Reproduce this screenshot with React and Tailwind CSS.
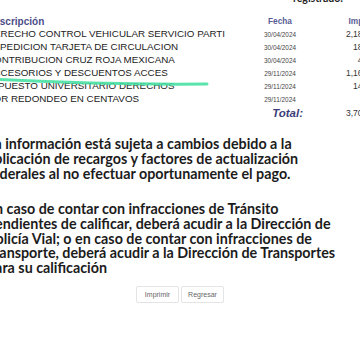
export default function App() {
  const rows = [
    { desc: 'DERECHO CONTROL VEHICULAR SERVICIO PARTI', date: '30/04/2024', amount: '2,189.00' },
    { desc: 'EXPEDICION TARJETA DE CIRCULACION', date: '30/04/2024', amount: '186.00' },
    { desc: 'CONTRIBUCION CRUZ ROJA MEXICANA', date: '30/04/2024', amount: '43.00' },
    { desc: 'ACCESORIOS Y DESCUENTOS ACCES', date: '29/11/2024', amount: '1,164.00' },
    { desc: 'IMPUESTO UNIVERSITARIO DERECHOS', date: '29/11/2024', amount: '147.00' },
    { desc: 'POR REDONDEO EN CENTAVOS', date: '29/11/2024', amount: '0.10' },
  ];

  return (
    <div className="relative w-[360px] h-[360px] overflow-hidden bg-white">
      <div className="-ml-[13px] w-[400px]">
        {/* header caption */}
        <div className="h-[14px] grid grid-cols-[263px_137px]">
          <div></div>
          <div className="-mt-[8px] pl-[43px] font-['Lato',sans-serif] font-bold text-[10.5px] leading-[12px] text-[#222]">
            registrado:
          </div>
        </div>

        {/* table */}
        <div className="font-['Liberation_Sans',Arial,sans-serif]">
          <div className="grid grid-cols-[263px_60px_69px] h-[13px] items-center">
            <div className="font-bold text-[10px] text-[#4b4d88]">Descripción</div>
            <div className="font-bold text-[8.3px] text-[#5a5d96] text-center">Fecha</div>
            <div className="font-bold text-[8.3px] text-[#5a5d96] text-right">Importe</div>
          </div>
          {rows.map((row, i) => (
            <div key={i} className="grid grid-cols-[263px_60px_69px] h-[13px] items-center">
              <div className="text-[9.8px] text-[#222] whitespace-nowrap">{row.desc}</div>
              <div className="text-[6.4px] text-[#444] text-center">{row.date}</div>
              <div className="text-[8.5px] text-[#333] text-right">{row.amount}</div>
            </div>
          ))}
          <div className="grid grid-cols-[263px_60px_69px] h-[16px] items-center">
            <div></div>
            <div className="font-bold italic text-[11.5px] text-[#3c3e7a] text-right pr-[7px]">Total:</div>
            <div className="text-[8.5px] text-[#333] text-right">3,709.10</div>
          </div>
        </div>

        {/* notes */}
        <div className="mt-[16px] font-['Lato',sans-serif] font-bold text-[14.3px] leading-[14.9px] text-[#1c1c1c] whitespace-nowrap">
          <p>
            La información está sujeta a cambios debido a la<br />
            aplicación de recargos y factores de actualización<br />
            federales al no efectuar oportunamente el pago.
          </p>
          <p className="mt-[20px]">
            En caso de contar con infracciones de Tránsito<br />
            pendientes de calificar, deberá acudir a la Dirección de<br />
            Policía Vial; o en caso de contar con infracciones de<br />
            Transporte, deberá acudir a la Dirección de Transportes<br />
            para su calificación
          </p>
        </div>
      </div>

      {/* buttons */}
      <div className="mt-[10px] flex justify-center gap-[2px] font-['Liberation_Sans',Arial,sans-serif]">
        <button className="w-[43px] h-[17px] border border-[#e4e4e4] rounded-[2px] bg-white text-[7px] text-[#666]">
          Imprimir
        </button>
        <button className="w-[43px] h-[17px] border border-[#e4e4e4] rounded-[2px] bg-white text-[7px] text-[#666]">
          Regresar
        </button>
      </div>

      {/* highlighter stroke */}
      <svg className="absolute left-0 top-0" width="360" height="120" viewBox="0 0 360 120">
        <path d="M-2 79.5 Q 110 85 207 84" fill="none" stroke="#48e0a2" strokeWidth="3" strokeLinecap="round" opacity="0.9" />
      </svg>
    </div>
  );
}
